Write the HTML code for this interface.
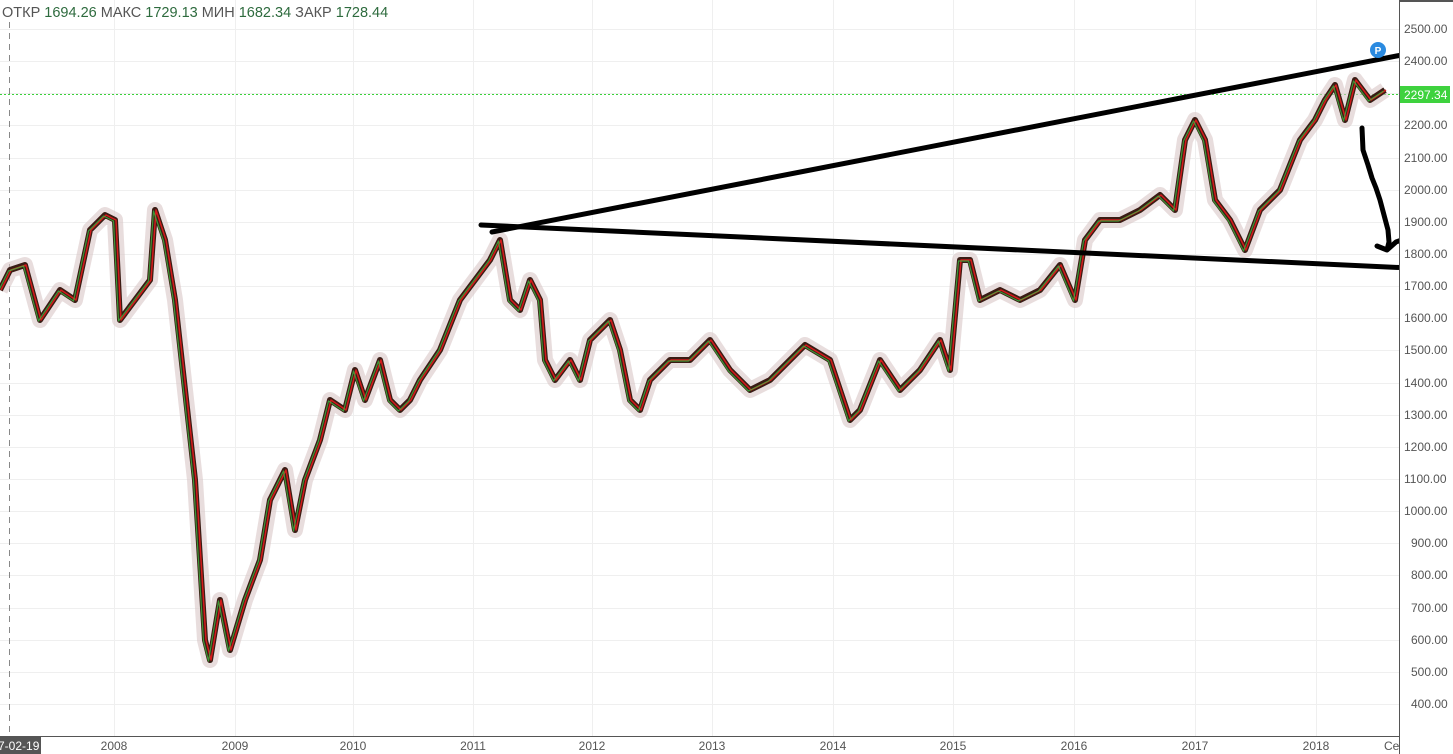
<!DOCTYPE html>
<html><head><meta charset="utf-8"><style>
body{margin:0;background:#fff;width:1453px;height:754px;overflow:hidden;font-family:"Liberation Sans",sans-serif}
</style></head><body>
<svg width="1453" height="754" xmlns="http://www.w3.org/2000/svg" style="position:absolute;left:0;top:0">
<defs>
<polyline id="p" fill="none" stroke-linejoin="round" points="0,290 10,270 25,265 40,320 60,290 75,300 90,230 105,215 115,220 120,320 135,300 150,280 155,210 165,240 175,300 185,390 195,480 205,640 210,660 220,600 230,650 245,600 260,560 270,500 285,470 295,530 305,480 320,440 330,400 345,410 355,370 365,400 380,360 390,400 400,410 410,400 420,380 440,350 460,300 475,280 490,260 500,240 510,300 520,310 530,280 540,300 545,360 555,380 570,360 580,380 590,340 610,320 620,350 630,400 640,410 650,380 670,360 690,360 710,340 730,370 750,390 770,380 790,360 805,345 830,360 850,420 860,410 880,360 900,390 920,370 940,340 950,370 960,260 970,260 980,300 1000,290 1020,300 1040,290 1060,265 1075,300 1085,240 1100,220 1120,220 1140,210 1160,195 1175,210 1185,140 1195,120 1205,140 1215,200 1230,220 1245,250 1260,210 1280,190 1300,140 1315,120 1325,100 1335,85 1345,120 1355,80 1370,100 1385,90"/>
</defs>
<g stroke="#efefef" stroke-width="1">
<line x1="0" y1="29.5" x2="1399" y2="29.5"/><line x1="0" y1="61.5" x2="1399" y2="61.5"/><line x1="0" y1="93.5" x2="1399" y2="93.5"/><line x1="0" y1="125.5" x2="1399" y2="125.5"/><line x1="0" y1="158.5" x2="1399" y2="158.5"/><line x1="0" y1="190.5" x2="1399" y2="190.5"/><line x1="0" y1="222.5" x2="1399" y2="222.5"/><line x1="0" y1="254.5" x2="1399" y2="254.5"/><line x1="0" y1="286.5" x2="1399" y2="286.5"/><line x1="0" y1="318.5" x2="1399" y2="318.5"/><line x1="0" y1="350.5" x2="1399" y2="350.5"/><line x1="0" y1="383.5" x2="1399" y2="383.5"/><line x1="0" y1="415.5" x2="1399" y2="415.5"/><line x1="0" y1="447.5" x2="1399" y2="447.5"/><line x1="0" y1="479.5" x2="1399" y2="479.5"/><line x1="0" y1="511.5" x2="1399" y2="511.5"/><line x1="0" y1="543.5" x2="1399" y2="543.5"/><line x1="0" y1="575.5" x2="1399" y2="575.5"/><line x1="0" y1="608.5" x2="1399" y2="608.5"/><line x1="0" y1="640.5" x2="1399" y2="640.5"/><line x1="0" y1="672.5" x2="1399" y2="672.5"/><line x1="0" y1="704.5" x2="1399" y2="704.5"/>
<line x1="114.5" y1="0" x2="114.5" y2="736"/><line x1="235.5" y1="0" x2="235.5" y2="736"/><line x1="353.5" y1="0" x2="353.5" y2="736"/><line x1="473.5" y1="0" x2="473.5" y2="736"/><line x1="592.5" y1="0" x2="592.5" y2="736"/><line x1="712.5" y1="0" x2="712.5" y2="736"/><line x1="833.5" y1="0" x2="833.5" y2="736"/><line x1="953.5" y1="0" x2="953.5" y2="736"/><line x1="1074.5" y1="0" x2="1074.5" y2="736"/><line x1="1195.5" y1="0" x2="1195.5" y2="736"/><line x1="1316.5" y1="0" x2="1316.5" y2="736"/>
</g>
<line x1="9.5" y1="22" x2="9.5" y2="736" stroke="#888" stroke-dasharray="6,5"/>
<line x1="0" y1="94.5" x2="1399" y2="94.5" stroke="#3ad13a" stroke-dasharray="2,2"/>
<use href="#p" stroke="#d9c6c6" stroke-width="16" opacity="0.6"/>
<use href="#p" stroke="#3a1c14" stroke-width="6"/>
<use href="#p" stroke="#d21b1b" stroke-width="1.5" transform="translate(1,0)"/>
<use href="#p" stroke="#3fb43f" stroke-width="1.2" transform="translate(-1.5,1)" opacity="0.8"/>
<g stroke="#000" stroke-width="5" fill="none" stroke-linecap="round" stroke-linejoin="round">
<line x1="492" y1="232" x2="1453" y2="45"/>
<line x1="481" y1="225" x2="1453" y2="270"/>
<path d="M1362,128 L1363,150 L1368,165 L1372,178 L1376,188 L1380,200 L1384,215 L1388,230 L1389,242 L1387,250 L1377,246 M1387,250 L1396,242 L1407,238"/>
</g>
<circle cx="1378" cy="50" r="8" fill="#2a8ae0"/>
<text x="1378" y="54" font-size="10" fill="#fff" text-anchor="middle" font-weight="bold">P</text>
<rect x="1399" y="0" width="54" height="754" fill="#fff"/>
<line x1="1399.5" y1="0" x2="1399.5" y2="754" stroke="#555"/>
<line x1="0" y1="736.5" x2="1399" y2="736.5" stroke="#555"/>
<g font-size="12" fill="#555">
<text x="1404" y="33">2500.00</text><text x="1404" y="65">2400.00</text><text x="1404" y="129">2200.00</text><text x="1404" y="162">2100.00</text><text x="1404" y="194">2000.00</text><text x="1404" y="226">1900.00</text><text x="1404" y="258">1800.00</text><text x="1404" y="290">1700.00</text><text x="1404" y="322">1600.00</text><text x="1404" y="354">1500.00</text><text x="1404" y="387">1400.00</text><text x="1404" y="419">1300.00</text><text x="1404" y="451">1200.00</text><text x="1404" y="483">1100.00</text><text x="1404" y="515">1000.00</text><text x="1411" y="547">900.00</text><text x="1411" y="579">800.00</text><text x="1411" y="612">700.00</text><text x="1411" y="644">600.00</text><text x="1411" y="676">500.00</text><text x="1411" y="708">400.00</text>
<text x="114" y="750" text-anchor="middle">2008</text><text x="235" y="750" text-anchor="middle">2009</text><text x="353" y="750" text-anchor="middle">2010</text><text x="473" y="750" text-anchor="middle">2011</text><text x="592" y="750" text-anchor="middle">2012</text><text x="712" y="750" text-anchor="middle">2013</text><text x="833" y="750" text-anchor="middle">2014</text><text x="953" y="750" text-anchor="middle">2015</text><text x="1074" y="750" text-anchor="middle">2016</text><text x="1195" y="750" text-anchor="middle">2017</text><text x="1316" y="750" text-anchor="middle">2018</text><text x="1384" y="750">Ce</text>
</g>
<rect x="1400" y="86" width="50" height="17" fill="#3ed23e"/>
<text x="1404" y="99" font-size="12" fill="#fff">2297.34</text>
<rect x="0" y="737" width="41" height="17" fill="#555"/>
<text x="-2" y="750" font-size="12" fill="#fff">7-02-19</text>
<line x1="1399" y1="0" x2="1453" y2="0" stroke="#555" stroke-width="4"/>
<text x="2" y="17" font-size="14.5" fill="#555">ОТКР <tspan fill="#2e6b3e">1694.26</tspan>   МАКС <tspan fill="#2e6b3e">1729.13</tspan>   МИН <tspan fill="#2e6b3e">1682.34</tspan>   ЗАКР <tspan fill="#2e6b3e">1728.44</tspan></text>
</svg>
</body></html>
